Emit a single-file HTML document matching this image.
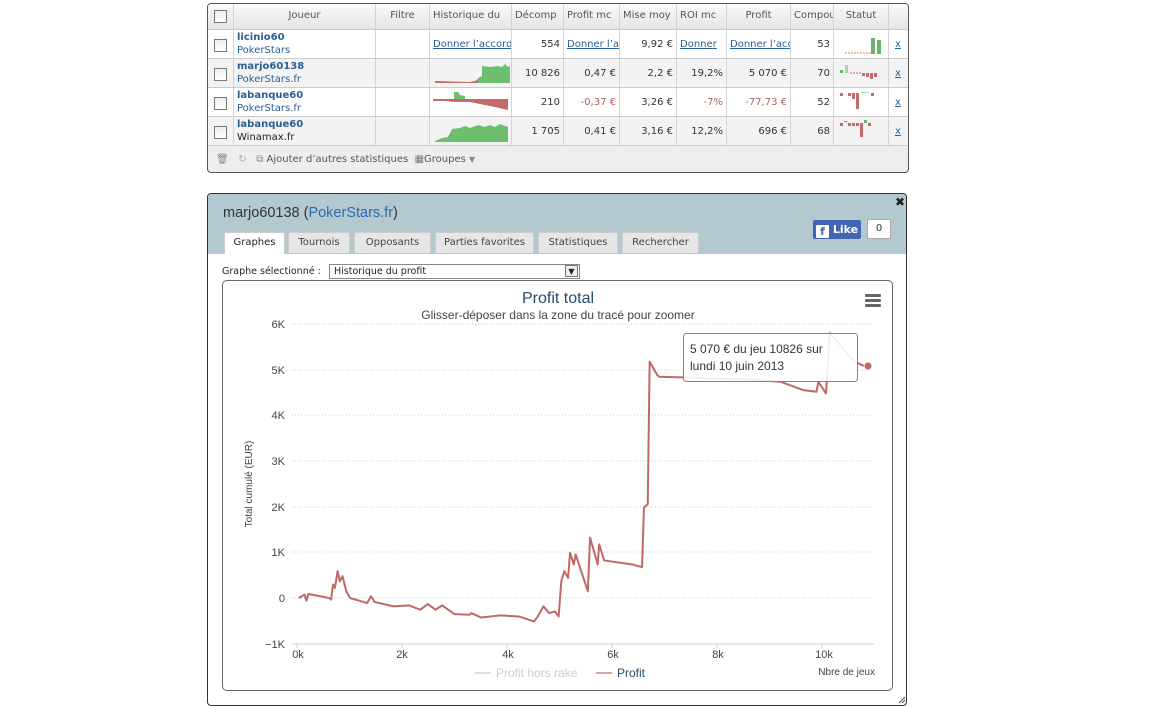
<!DOCTYPE html>
<html><head><meta charset="utf-8"><style>
*{box-sizing:border-box;margin:0;padding:0}
body{width:1175px;height:706px;background:#fff;font-family:"DejaVu Sans",Verdana,sans-serif;position:relative;overflow:hidden;font-size:10px;color:#333}
.abs{position:absolute}
#tbl{left:207px;top:3px;width:702px;height:170px;border:1px solid #555;border-radius:4px;background:#eee;overflow:hidden}
.hdr{position:absolute;left:0;top:0;width:100%;height:26px;background:linear-gradient(#fafafa,#e4e4e4);border-bottom:1px solid #ccc}
.c{position:absolute;height:100%;border-right:1px solid #d4d4d4;overflow:hidden;white-space:nowrap;font-size:10px;padding:0 3px}
.row{position:absolute;left:0;width:100%;height:29px;border-bottom:1px solid #ccc}
.cb{position:absolute;left:7px;width:13px;height:13px;border:1px solid #777;background:linear-gradient(#eee,#fff)}
.nm{color:#2a5f95;font-weight:bold;font-size:10px;line-height:12px}
.sub{line-height:13px}
.lnk{color:#2a5f95;text-decoration:underline}
.r{text-align:right}
.neg{color:#b06060}
#panel{left:207px;top:193px;width:700px;height:513px;border:1px solid #333;border-radius:4px;background:#fff;overflow:hidden}
.tab{position:absolute;top:38px;height:21px;background:#e6e6e6;border:1px solid #ccc;border-bottom:none;font-size:10px;color:#444;text-align:center;line-height:20px;border-radius:2px 2px 0 0}
</style></head><body>
<div id="tbl" class="abs">
 <div class="hdr">
  <div class="c" style="left:0;width:26px"><div class="cb" style="top:6px;left:6px"></div></div>
  <div class="c" style="left:26px;width:142px;text-align:center;line-height:24px;color:#555">Joueur</div>
  <div class="c" style="left:168px;width:54px;text-align:center;line-height:24px;color:#555">Filtre</div>
  <div class="c" style="left:222px;width:82px;line-height:24px;color:#555">Historique du</div>
  <div class="c" style="left:304px;width:52px;line-height:24px;color:#555">Décomp</div>
  <div class="c" style="left:356px;width:56px;line-height:24px;color:#555">Profit mc</div>
  <div class="c" style="left:412px;width:57px;line-height:24px;color:#555">Mise moy</div>
  <div class="c" style="left:469px;width:50px;line-height:24px;color:#555">ROI mc</div>
  <div class="c" style="left:519px;width:64px;text-align:center;line-height:24px;color:#555">Profit</div>
  <div class="c" style="left:583px;width:43px;line-height:24px;color:#555">Compounds</div>
  <div class="c" style="left:626px;width:55px;text-align:center;line-height:24px;color:#555">Statut</div>
 </div>
 <div class="row" style="top:26px;background:#fff">
  <div class="c" style="left:0;width:26px"><div class="cb" style="top:9px;left:6px"></div></div>
  <div class="c" style="left:26px;width:142px;padding-top:2px"><div class="nm">licinio60</div><div class="sub" style="color:#2a5f95">PokerStars</div></div>
  <div class="c" style="left:168px;width:54px"></div>
  <div class="c" style="left:222px;width:82px;line-height:29px"><span class="lnk">Donner l’accord</span></div>
  <div class="c r" style="left:304px;width:52px;line-height:29px">554</div>
  <div class="c" style="left:356px;width:56px;line-height:29px"><span class="lnk">Donner l’accord</span></div>
  <div class="c r" style="left:412px;width:57px;line-height:29px">9,92 €</div>
  <div class="c" style="left:469px;width:50px;line-height:29px"><span class="lnk">Donner</span></div>
  <div class="c" style="left:519px;width:64px;line-height:29px"><span class="lnk">Donner l’accord</span></div>
  <div class="c r" style="left:583px;width:43px;line-height:29px">53</div>
  <div class="c" style="left:626px;width:55px"><svg width="55" height="29"><line x1="8" y1="23" x2="34" y2="23" stroke="#e08a3a" stroke-dasharray="2,1"/><rect x="34" y="8" width="4" height="16" fill="#6db36d"/><rect x="40" y="10" width="4" height="14" fill="#6db36d"/></svg></div>
  <div class="c" style="left:681px;width:21px;line-height:29px;border:none;padding-left:6px"><span class="lnk">x</span></div>
 </div>
 <div class="row" style="top:55px;background:#f3f3f3">
  <div class="c" style="left:0;width:26px"><div class="cb" style="top:9px;left:6px"></div></div>
  <div class="c" style="left:26px;width:142px;padding-top:2px"><div class="nm">marjo60138</div><div class="sub" style="color:#2a5f95">PokerStars.fr</div></div>
  <div class="c" style="left:168px;width:54px"></div>
  <div class="c" style="left:222px;width:82px;padding:0"><svg width="82" height="29"><path d="M5 22 L40 23 L45 22 L48 20 L52 18 L52 24 L5 24Z" fill="#c46a6a"/><path d="M48 24 L48 19 L52 17 L52 7 L60 8 L68 7 L72 8 L75 5 L78 8 L80 7 L80 24Z" fill="#6dbf6d"/></svg></div>
  <div class="c r" style="left:304px;width:52px;line-height:29px">10 826</div>
  <div class="c r" style="left:356px;width:56px;line-height:29px">0,47 €</div>
  <div class="c r" style="left:412px;width:57px;line-height:29px">2,2 €</div>
  <div class="c r" style="left:469px;width:50px;line-height:29px">19,2%</div>
  <div class="c r" style="left:519px;width:64px;line-height:29px">5 070 €</div>
  <div class="c r" style="left:583px;width:43px;line-height:29px">70</div>
  <div class="c" style="left:626px;width:55px"><svg width="55" height="29"><rect x="3" y="11" width="3" height="3" fill="#6db36d"/><rect x="8" y="6" width="3" height="8" fill="#9de09d"/><line x1="13" y1="14" x2="24" y2="14" stroke="#c46a6a" stroke-dasharray="2,1"/><rect x="25" y="14" width="3" height="3" fill="#c46a6a"/><rect x="29" y="14" width="3" height="4" fill="#c46a6a"/><rect x="33" y="14" width="3" height="6" fill="#c46a6a"/><rect x="37" y="14" width="3" height="4" fill="#c46a6a"/></svg></div>
  <div class="c" style="left:681px;width:21px;line-height:29px;border:none;padding-left:6px"><span class="lnk">x</span></div>
 </div>
 <div class="row" style="top:84px;background:#fff">
  <div class="c" style="left:0;width:26px"><div class="cb" style="top:9px;left:6px"></div></div>
  <div class="c" style="left:26px;width:142px;padding-top:2px"><div class="nm">labanque60</div><div class="sub" style="color:#2a5f95">PokerStars.fr</div></div>
  <div class="c" style="left:168px;width:54px"></div>
  <div class="c" style="left:222px;width:82px;padding:0"><svg width="82" height="29"><path d="M3 11 L78 11 L78 22 L65 19 L50 16 L40 14 L25 14 L15 13 L3 13 Z" fill="#c46a6a"/><path d="M24 11 L24 4 L28 4 L30 7 L35 8 L35 11Z" fill="#6dbf6d"/></svg></div>
  <div class="c r" style="left:304px;width:52px;line-height:29px">210</div>
  <div class="c r neg" style="left:356px;width:56px;line-height:29px">-0,37 €</div>
  <div class="c r" style="left:412px;width:57px;line-height:29px">3,26 €</div>
  <div class="c r neg" style="left:469px;width:50px;line-height:29px">-7%</div>
  <div class="c r neg" style="left:519px;width:64px;line-height:29px">-77,73 €</div>
  <div class="c r" style="left:583px;width:43px;line-height:29px">52</div>
  <div class="c" style="left:626px;width:55px"><svg width="55" height="29"><rect x="3" y="5" width="3" height="3" fill="#c46a6a"/><rect x="11" y="5" width="3" height="3" fill="#c46a6a"/><rect x="15" y="5" width="3" height="6" fill="#c46a6a"/><rect x="19" y="5" width="3" height="16" fill="#c46a6a"/><rect x="24" y="4" width="8" height="1" fill="#9de0c0"/><rect x="34" y="5" width="3" height="3" fill="#c46a6a"/></svg></div>
  <div class="c" style="left:681px;width:21px;line-height:29px;border:none;padding-left:6px"><span class="lnk">x</span></div>
 </div>
 <div class="row" style="top:113px;background:#f3f3f3">
  <div class="c" style="left:0;width:26px"><div class="cb" style="top:9px;left:6px"></div></div>
  <div class="c" style="left:26px;width:142px;padding-top:2px"><div class="nm">labanque60</div><div class="sub" style="color:#222">Winamax.fr</div></div>
  <div class="c" style="left:168px;width:54px"></div>
  <div class="c" style="left:222px;width:82px;padding:0"><svg width="82" height="29"><path d="M5 24 L12 21 L18 20 L22 12 L30 11 L35 9 L40 11 L48 8 L55 10 L60 8 L65 10 L70 7 L78 10 L78 25 L5 25Z" fill="#6dbf6d"/></svg></div>
  <div class="c r" style="left:304px;width:52px;line-height:29px">1 705</div>
  <div class="c r" style="left:356px;width:56px;line-height:29px">0,41 €</div>
  <div class="c r" style="left:412px;width:57px;line-height:29px">3,16 €</div>
  <div class="c r" style="left:469px;width:50px;line-height:29px">12,2%</div>
  <div class="c r" style="left:519px;width:64px;line-height:29px">696 €</div>
  <div class="c r" style="left:583px;width:43px;line-height:29px">68</div>
  <div class="c" style="left:626px;width:55px"><svg width="55" height="29"><rect x="3" y="6" width="3" height="3" fill="#c46a6a"/><rect x="7" y="4" width="3" height="1" fill="#6db36d"/><rect x="11" y="6" width="3" height="3" fill="#c46a6a"/><rect x="15" y="6" width="3" height="3" fill="#c46a6a"/><rect x="19" y="6" width="3" height="3" fill="#c46a6a"/><rect x="23" y="6" width="3" height="14" fill="#c46a6a"/><rect x="27" y="3" width="3" height="3" fill="#6db36d"/><rect x="31" y="6" width="3" height="3" fill="#c46a6a"/></svg></div>
  <div class="c" style="left:681px;width:21px;line-height:29px;border:none;padding-left:6px"><span class="lnk">x</span></div>
 </div>
 <div class="abs" style="left:8px;top:150px;font-size:10px;color:#555;white-space:nowrap">
  <span style="color:#888">🗑</span>&nbsp;&nbsp;&nbsp;<span style="color:#aaa">↻</span>&nbsp;&nbsp;&nbsp;<span style="color:#888">⧉</span> Ajouter d’autres statistiques&nbsp;&nbsp;<span style="color:#777">▦</span>Groupes <span style="color:#888;font-size:8px">▼</span>
 </div>
</div>

<div id="panel" class="abs">
 <div class="abs" style="left:0;top:0;width:700px;height:60px;background:#b4c8d0"></div>
 <div class="abs" style="left:15px;top:11px;font-size:14.5px;color:#333;font-family:'Liberation Sans',sans-serif">marjo60138 (<span style="color:#2a6ab0">PokerStars.fr</span>)</div>
 <div class="abs" style="left:687px;top:1px;font-size:12px;font-weight:bold;color:#222">✖</div>
 <div class="abs" style="left:605px;top:26px;width:48px;height:19px;background:#4267b2;border-radius:2px;color:#fff;font-weight:bold;font-size:11px;line-height:19px;padding-left:3px"><span style="display:inline-block;width:13px;height:13px;background:#fff;color:#4267b2;text-align:center;line-height:14px;vertical-align:-2px;border-radius:1px">f</span> Like</div>
 <div class="abs" style="left:659px;top:25px;width:24px;height:20px;background:#fff;border:1px solid #aaa;border-radius:2px;text-align:center;line-height:18px;font-size:10px">0</div>
 <div class="tab" style="left:16px;width:61px;background:#fff;color:#222;height:22px">Graphes</div>
 <div class="tab" style="left:80px;width:62px">Tournois</div>
 <div class="tab" style="left:146px;width:77px">Opposants</div>
 <div class="tab" style="left:227px;width:99px">Parties favorites</div>
 <div class="tab" style="left:330px;width:80px">Statistiques</div>
 <div class="tab" style="left:414px;width:77px">Rechercher</div>
 <div class="abs" style="left:14px;top:72px;font-size:9.5px;color:#222">Graphe sélectionné :</div>
 <div class="abs" style="left:121px;top:70px;width:251px;height:15px;border:1px solid #888;font-size:9.5px;padding-left:4px;line-height:13px;color:#222">Historique du profit<span style="position:absolute;right:1px;top:0;width:13px;height:12px;border:1px solid #777;background:#eee;font-size:8px;text-align:center;line-height:11px">▼</span></div>
 <div class="abs" style="left:14px;top:86px;width:671px;height:411px;border:1px solid #666;border-radius:5px"></div>
</div>

<svg class="abs" style="left:0;top:0" width="1175" height="706">
 <text x="558" y="303" text-anchor="middle" font-size="16" fill="#274b6d" font-family="Liberation Sans,sans-serif">Profit total</text>
 <text x="558" y="319" text-anchor="middle" font-size="12" fill="#444" font-family="Liberation Sans,sans-serif">Glisser-déposer dans la zone du tracé pour zoomer</text>
 <rect x="865" y="294" width="16" height="3" rx="1" fill="#666"/><rect x="865" y="299" width="16" height="3" rx="1" fill="#666"/><rect x="865" y="304" width="16" height="3" rx="1" fill="#666"/>
 <g stroke="#ccc" stroke-dasharray="1,2">
  <line x1="292" y1="324" x2="874" y2="324"/><line x1="292" y1="370" x2="874" y2="370"/><line x1="292" y1="415" x2="874" y2="415"/><line x1="292" y1="461" x2="874" y2="461"/><line x1="292" y1="507" x2="874" y2="507"/><line x1="292" y1="552" x2="874" y2="552"/><line x1="292" y1="598" x2="874" y2="598"/>
 </g>
 <line x1="292" y1="644" x2="874" y2="644" stroke="#c0d0e0"/>
 <g stroke="#c0d0e0"><line x1="297" y1="644" x2="297" y2="648"/><line x1="402" y1="644" x2="402" y2="648"/><line x1="507" y1="644" x2="507" y2="648"/><line x1="612" y1="644" x2="612" y2="648"/><line x1="717" y1="644" x2="717" y2="648"/><line x1="822" y1="644" x2="822" y2="648"/></g>
 <g font-size="11" fill="#444" font-family="Liberation Sans,sans-serif" text-anchor="end">
  <text x="285" y="328">6K</text><text x="285" y="374">5K</text><text x="285" y="419">4K</text><text x="285" y="465">3K</text><text x="285" y="511">2K</text><text x="285" y="556">1K</text><text x="285" y="602">0</text><text x="285" y="648">−1K</text>
 </g>
 <g font-size="11" fill="#444" font-family="Liberation Sans,sans-serif" text-anchor="middle">
  <text x="298" y="658">0k</text><text x="402" y="658">2k</text><text x="508" y="658">4k</text><text x="613" y="658">6k</text><text x="718" y="658">8k</text><text x="824" y="658">10k</text>
 </g>
 <text x="252" y="484" font-size="10" fill="#444" transform="rotate(-90 252 484)" text-anchor="middle" font-family="Liberation Sans,sans-serif">Total cumulé (EUR)</text>
 <text x="875" y="675" font-size="10" fill="#444" text-anchor="end" font-family="Liberation Sans,sans-serif">Nbre de jeux</text>
 <line x1="475" y1="673" x2="491" y2="673" stroke="#ddd" stroke-width="2"/>
 <text x="496" y="677" font-size="12" fill="#ccc" font-family="Liberation Sans,sans-serif">Profit hors rake</text>
 <line x1="596" y1="673" x2="612" y2="673" stroke="#d8a8a8" stroke-width="2"/>
 <text x="617" y="677" font-size="12" fill="#274b6d" font-family="Liberation Sans,sans-serif">Profit</text>
 <g transform="matrix(0.3792 0 0 0.3353 291.3 319.7)">
  <polyline fill="none" stroke="#c06868" stroke-width="2" vector-effect="non-scaling-stroke" stroke-linejoin="round"
  points="20,830 35,820 40,838 45,818 100,830 105,835 110,790 115,800 122,750 128,780 135,765 145,810 155,830 200,845 210,825 220,842 270,855 310,852 340,865 360,848 380,865 398,852 430,878 470,880 475,875 500,888 550,882 600,885 640,900 650,885 665,855 680,875 695,870 705,885 712,780 720,750 730,770 735,695 745,730 750,700 782,810 788,650 808,730 812,670 825,718 900,730 925,738 930,560 940,550 945,125 965,165 970,170 1030,172 1100,175 1200,178 1290,185 1350,210 1385,215 1390,185 1410,220 1420,40 1485,125 1495,130 1510,138"/>
 </g>
 <circle cx="868" cy="366" r="3.5" fill="#c06868"/>
 <rect x="683.5" y="333.5" width="174" height="48" rx="3" fill="rgba(255,255,255,0.88)" stroke="#c06868"/>
 <text x="690" y="353" font-size="12" fill="#333" font-family="Liberation Sans,sans-serif">5 070 € du jeu 10826 sur</text>
 <text x="690" y="370" font-size="12" fill="#333" font-family="Liberation Sans,sans-serif">lundi 10 juin 2013</text>
 <path d="M905 697 L899 703 M905 700 L902 703" stroke="#555"/>
</svg>
</body></html>
